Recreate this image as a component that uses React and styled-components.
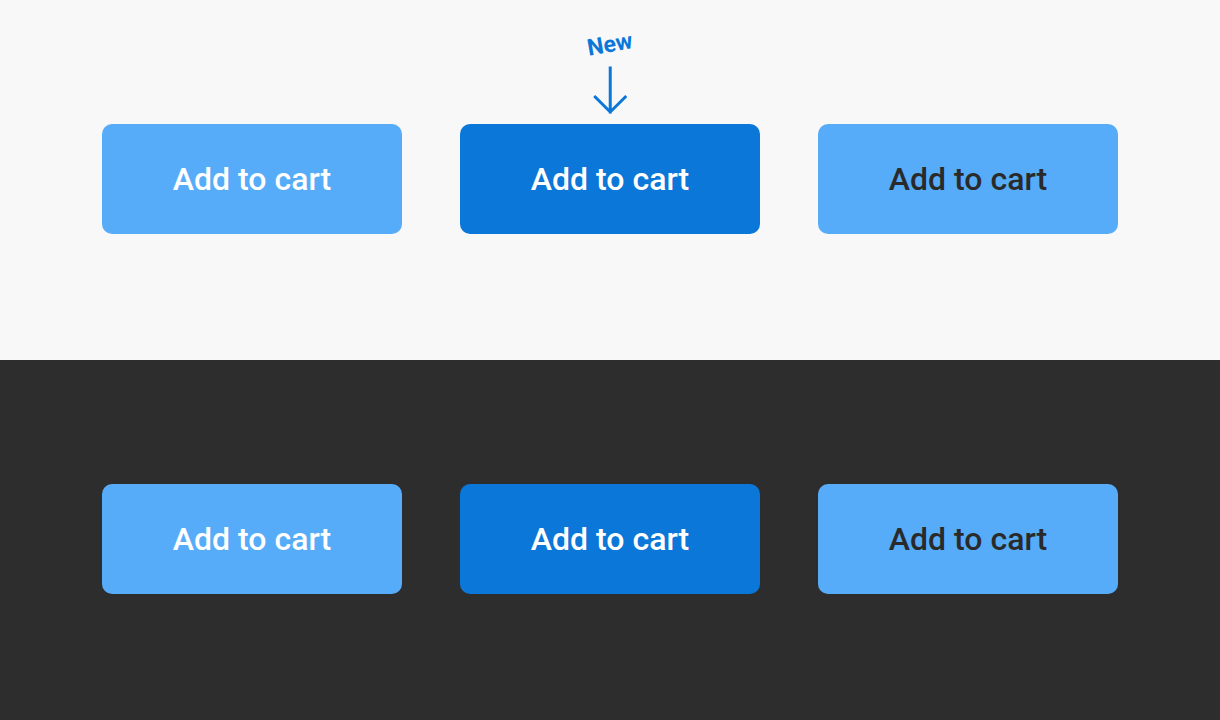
import React from 'react'
import styled, { createGlobalStyle } from 'styled-components'

const GlobalStyle = createGlobalStyle`
  html, body {
    margin: 0;
    padding: 0;
  }
  body {
    font-family: Roboto, "Noto Sans", sans-serif;
  }
`

const Page = styled.div`
  display: flex;
  flex-direction: column;
  width: 1220px;
  height: 720px;
`

const Section = styled.section`
  display: flex;
  justify-content: center;
  align-items: center;
  gap: 58px;
  height: 360px;
  box-sizing: border-box;
  padding-bottom: 2px;
  background: ${p => (p.$dark ? '#2d2d2d' : '#f8f8f8')};
`

const ButtonSlot = styled.div`
  position: relative;
`

const CartButton = styled.button`
  display: flex;
  align-items: center;
  justify-content: center;
  width: 300px;
  height: 110px;
  border: none;
  border-radius: 10px;
  font-family: Roboto, sans-serif;
  font-size: 32px;
  font-weight: 500;
  background: ${p => (p.$variant === 'primary' ? '#0b77d9' : '#56acf9')};
  color: ${p => (p.$variant === 'muted' ? '#2a2a2a' : '#ffffff')};
  cursor: pointer;
`

const Callout = styled.div`
  position: absolute;
  left: 50%;
  bottom: 100%;
  transform: translateX(-50%);
  display: flex;
  flex-direction: column;
  align-items: center;
  padding-bottom: 8px;
  color: #0b77d9;
`

const NewLabel = styled.span`
  font-family: Roboto, sans-serif;
  font-weight: 700;
  font-size: 23px;
  line-height: 1;
  transform: rotate(-10deg);
  margin-bottom: 10px;
`

const Arrow = () => (
  <svg width="34" height="50" viewBox="0 0 34 50" fill="none">
    <path
      d="M17 2 V46 M2 31 L17 46 L32 31"
      stroke="currentColor"
      strokeWidth="3"
      strokeLinecap="square"
    />
  </svg>
)

const Row = ({ dark }) => (
  <Section $dark={dark}>
    <ButtonSlot>
      <CartButton $variant='light'>Add to cart</CartButton>
    </ButtonSlot>
    <ButtonSlot>
      {!dark && (
        <Callout>
          <NewLabel>New</NewLabel>
          <Arrow />
        </Callout>
      )}
      <CartButton $variant='primary'>Add to cart</CartButton>
    </ButtonSlot>
    <ButtonSlot>
      <CartButton $variant='muted'>Add to cart</CartButton>
    </ButtonSlot>
  </Section>
)

const App = () => (
  <>
    <GlobalStyle />
    <Page>
      <Row />
      <Row dark />
    </Page>
  </>
)

export default App
